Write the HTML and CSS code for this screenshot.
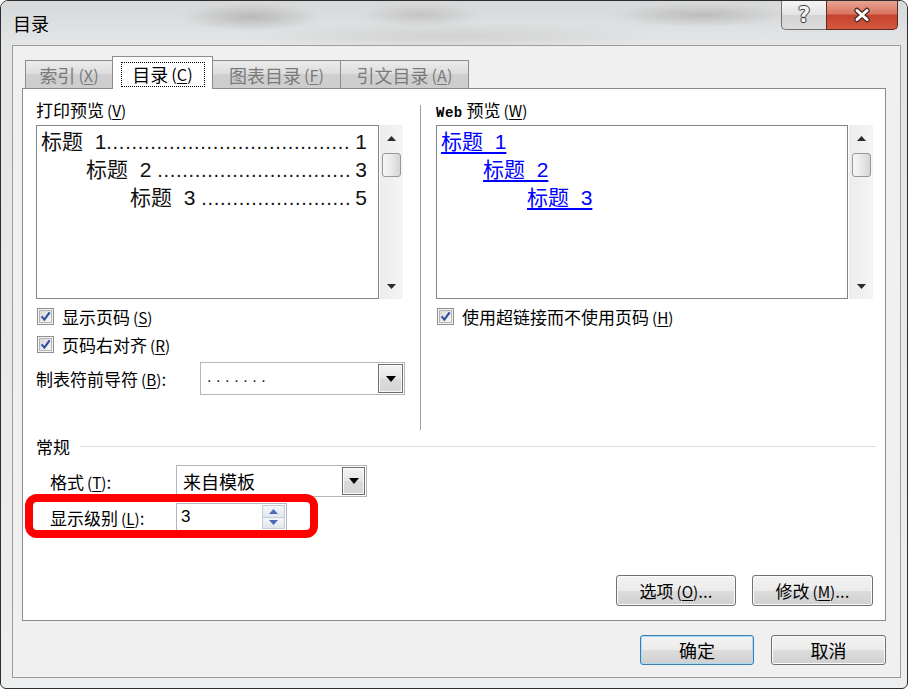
FILE: index.html
```html
<!DOCTYPE html>
<html lang="zh-CN">
<head>
<meta charset="utf-8">
<title>目录</title>
<link rel="stylesheet" href="styles.css">
</head>
<body>
<div class="window">
  <div class="titlebar">
    <span class="title">目录</span>
    <div class="caption">
      <div class="cap-btn cap-help"><span class="qmark">?</span></div>
      <div class="cap-btn cap-close">
        <svg width="22" height="16" viewBox="0 0 22 16"><path d="M6 3.5 L16 12.5 M16 3.5 L6 12.5" stroke="#4a2b25" stroke-width="5.5" stroke-linecap="round"/><path d="M6 3.5 L16 12.5 M16 3.5 L6 12.5" stroke="#ffffff" stroke-width="3" stroke-linecap="round"/></svg>
      </div>
    </div>
  </div>
  <div class="client">
    <div class="tabs">
      <div class="tab tab-1">索引<span class="k">(<u>X</u>)</span></div>
      <div class="tab tab-2 active"><span class="focus">目录<span class="k">(<u>C</u>)</span></span></div>
      <div class="tab tab-3">图表目录<span class="k">(<u>F</u>)</span></div>
      <div class="tab tab-4">引文目录<span class="k">(<u>A</u>)</span></div>
    </div>
    <div class="panel">
      <div class="columns">
        <div class="col col-left">
          <div class="label">打印预览<span class="k">(<u>V</u>)</span></div>
          <div class="preview-row">
            <div class="preview-box">
              <div class="toc-line"><span class="head">标题&nbsp;&nbsp;1</span><span class="dots">.......................................</span><span class="num">1</span></div>
              <div class="toc-line lvl-2"><span class="head">标题&nbsp;&nbsp;2&nbsp;</span><span class="dots">...............................</span><span class="num">3</span></div>
              <div class="toc-line lvl-3"><span class="head">标题&nbsp;&nbsp;3&nbsp;</span><span class="dots">........................</span><span class="num">5</span></div>
            </div>
            <div class="scrollbar sb-left">
              <div class="sb-arrow"><svg width="9" height="5" viewBox="0 0 9 5"><path d="M0 5 L4.5 0 L9 5Z" fill="#2b2b2b"/></svg></div>
              <div class="sb-thumb"></div>
              <div class="sb-fill"></div>
              <div class="sb-arrow"><svg width="9" height="5" viewBox="0 0 9 5"><path d="M0 0 L4.5 5 L9 0Z" fill="#2b2b2b"/></svg></div>
            </div>
          </div>
          <div class="check-row first">
            <svg class="cb" width="17" height="17" viewBox="0 0 17 17"><defs><linearGradient id="cbg" x1="0" y1="0" x2="1" y2="1"><stop offset="0" stop-color="#d6d6d6"/><stop offset="1" stop-color="#fbfbfb"/></linearGradient></defs><rect x="0.5" y="0.5" width="16" height="16" fill="#f4f4f4" stroke="#8f8f8f"/><rect x="2.5" y="2.5" width="12" height="12" fill="url(#cbg)" stroke="#b4b4b4"/><path d="M4.6 8.4 L7.4 11.6 L12.6 4.4" fill="none" stroke="#2f4f9f" stroke-width="2.2"/></svg>
            <span>显示页码<span class="k">(<u>S</u>)</span></span>
          </div>
          <div class="check-row">
            <svg class="cb" width="17" height="17" viewBox="0 0 17 17"><rect x="0.5" y="0.5" width="16" height="16" fill="#f4f4f4" stroke="#8f8f8f"/><rect x="2.5" y="2.5" width="12" height="12" fill="url(#cbg)" stroke="#b4b4b4"/><path d="M4.6 8.4 L7.4 11.6 L12.6 4.4" fill="none" stroke="#2f4f9f" stroke-width="2.2"/></svg>
            <span>页码右对齐<span class="k">(<u>R</u>)</span></span>
          </div>
          <div class="leader-row">
            <span class="leader-label">制表符前导符<span class="k">(<u>B</u>)</span>:</span>
            <div class="combo combo-leader">
              <span class="combo-text leader-dots">.......</span>
              <div class="combo-btn"><svg width="10" height="6" viewBox="0 0 10 6"><path d="M0 0 L5 6 L10 0Z" fill="#000"/></svg></div>
            </div>
          </div>
        </div>
        <div class="sep"></div>
        <div class="col col-right">
          <div class="label"><span class="web">Web</span> 预览<span class="k">(<u>W</u>)</span></div>
          <div class="preview-row">
            <div class="preview-box web-box">
              <div class="link-line"><span class="link">标题&nbsp;&nbsp;1</span></div>
              <div class="link-line lvl-2w"><span class="link">标题&nbsp;&nbsp;2</span></div>
              <div class="link-line lvl-3w"><span class="link">标题&nbsp;&nbsp;3</span></div>
            </div>
            <div class="scrollbar sb-right">
              <div class="sb-arrow"><svg width="9" height="5" viewBox="0 0 9 5"><path d="M0 5 L4.5 0 L9 5Z" fill="#2b2b2b"/></svg></div>
              <div class="sb-thumb"></div>
              <div class="sb-fill"></div>
              <div class="sb-arrow"><svg width="9" height="5" viewBox="0 0 9 5"><path d="M0 0 L4.5 5 L9 0Z" fill="#2b2b2b"/></svg></div>
            </div>
          </div>
          <div class="check-row first">
            <svg class="cb" width="17" height="17" viewBox="0 0 17 17"><rect x="0.5" y="0.5" width="16" height="16" fill="#f4f4f4" stroke="#8f8f8f"/><rect x="2.5" y="2.5" width="12" height="12" fill="url(#cbg)" stroke="#b4b4b4"/><path d="M4.6 8.4 L7.4 11.6 L12.6 4.4" fill="none" stroke="#2f4f9f" stroke-width="2.2"/></svg>
            <span>使用超链接而不使用页码<span class="k">(<u>H</u>)</span></span>
          </div>
        </div>
      </div>
      <div class="group-head"><span>常规</span><span class="group-line"></span></div>
      <div class="form-row">
        <span class="form-label">格式<span class="k">(<u>T</u>)</span>:</span>
        <div class="combo combo-format">
          <span class="combo-text">来自模板</span>
          <div class="combo-btn"><svg width="10" height="6" viewBox="0 0 10 6"><path d="M0 0 L5 6 L10 0Z" fill="#000"/></svg></div>
        </div>
      </div>
      <div class="form-row row-level">
        <span class="form-label">显示级别<span class="k">(<u>L</u>)</span>:</span>
        <div class="spinner">
          <span class="spin-text">3</span>
          <div class="spin-btns">
            <div class="spin-half"><svg width="9" height="5" viewBox="0 0 9 5"><path d="M0 5 L4.5 0 L9 5Z" fill="#4a6cb8"/></svg></div>
            <div class="spin-half"><svg width="9" height="5" viewBox="0 0 9 5"><path d="M0 0 L4.5 5 L9 0Z" fill="#4a6cb8"/></svg></div>
          </div>
        </div>
      </div>
      <div class="highlight"></div>
      <div class="panel-btns">
        <div class="btn btn-options">选项<span class="k">(<u>O</u>)</span>...</div>
        <div class="btn btn-modify">修改<span class="k">(<u>M</u>)</span>...</div>
      </div>
    </div>
    <div class="dialog-btns">
      <div class="btn btn-ok default">确定</div>
      <div class="btn btn-cancel">取消</div>
    </div>
  </div>
</div>
</body>
</html>
```

FILE: styles.css
```css
* {
  box-sizing: border-box;
}

html, body {
  margin: 0;
  padding: 0;
}

body {
  width: 910px;
  height: 689px;
  overflow: hidden;
  background: #ffffff;
  font-family: "Noto Sans CJK SC", "Liberation Sans", sans-serif;
  color: #000;
}

u {
  text-decoration: underline;
  text-underline-offset: 2px;
}

.k {
  margin-left: 3px;
  font-size: 0.9em;
}

.window {
  width: 908px;
  height: 689px;
  border: 1px solid #2e2e2e;
  border-radius: 8px 8px 6px 6px;
  background: linear-gradient(#e2e4e6, #eceeef);
  display: flex;
  flex-direction: column;
  overflow: hidden;
}

/* title bar */
.titlebar {
  flex: none;
  height: 44px;
  display: flex;
  align-items: flex-start;
  padding-left: 12px;
  background:
    radial-gradient(ellipse 70px 14px at 250px 16px, rgba(120,120,120,0.35), rgba(120,120,120,0)),
    radial-gradient(ellipse 60px 12px at 420px 14px, rgba(140,140,140,0.3), rgba(140,140,140,0)),
    radial-gradient(ellipse 90px 12px at 700px 14px, rgba(130,130,130,0.35), rgba(130,130,130,0)),
    radial-gradient(ellipse 200px 14px at 450px 36px, rgba(170,170,170,0.3), rgba(170,170,170,0)),
    linear-gradient(#d7d8d9, #e4e5e6);
}

.title {
  font-size: 18px;
  line-height: 44px;
  color: #000;
}

.caption {
  margin-left: auto;
  margin-right: 9px;
  display: flex;
  height: 29px;
}

.cap-btn {
  height: 29px;
  display: flex;
  align-items: center;
  justify-content: center;
  border: 1px solid #6f6f6f;
  border-top: none;
}

.cap-help {
  width: 45px;
  border-right: none;
  border-radius: 0 0 0 5px;
  background: linear-gradient(#f4f4f4, #e4e4e4 48%, #d3d3d3 52%, #dcdcdc);
}

.qmark {
  font-family: "DejaVu Sans", sans-serif;
  font-weight: bold;
  font-size: 21px;
  line-height: 24px;
  color: #f4f4f4;
  text-shadow: 1px 0 0 #3a3a3a, -1px 0 0 #3a3a3a, 0 1px 0 #3a3a3a, 0 -1px 0 #3a3a3a;
}

.cap-close {
  width: 72px;
  border-color: #5b2b22;
  border-radius: 0 0 5px 0;
  background: linear-gradient(#e8a493, #d97561 45%, #c5432c 52%, #d3573f);
}

/* client area */
.client {
  flex: none;
  height: 633px;
  margin: 0 6px 0 11px;
  border: 1px solid #9c9c9c;
  background: #f0f0f0;
  padding: 10px 0 0 9px;
  display: flex;
  flex-direction: column;
}

.tabs {
  position: relative;
  z-index: 1;
  height: 32px;
  display: flex;
  align-items: flex-end;
  padding-left: 3px;
}

.tab {
  height: 28px;
  border: 1px solid #898c95;
  border-bottom: none;
  background: linear-gradient(#ececec, #dcdcdc 50%, #cfcfcf 50%, #cdcdcd);
  color: #7a7a7a;
  font-size: 18px;
  line-height: 26px;
  display: flex;
  justify-content: center;
  align-items: center;
  margin-left: -1px;
}

.tab-1 { width: 88px; margin-left: 0; }
.tab-2 { width: 101px; }
.tab-3 { width: 129px; }
.tab-4 { width: 129px; }

.tab.active {
  position: relative;
  z-index: 2;
  height: 33px;
  margin-bottom: -1px;
  background: #ffffff;
  color: #000;
}

.focus {
  display: flex;
  align-items: center;
  justify-content: center;
  width: 84px;
  height: 25px;
  margin-top: 2px;
  border: 1px dotted #000;
}

.panel {
  position: relative;
  width: 864px;
  height: 533px;
  border: 1px solid #898c95;
  background: #ffffff;
  padding: 11px 12px 0 13px;
  display: flex;
  flex-direction: column;
}

.columns {
  height: 330px;
  display: flex;
  align-items: flex-start;
  flex: none;
}

.col-left { width: 369px; }
.col-right { width: 437px; }

.sep {
  width: 2px;
  height: 325px;
  margin: 5px 14px 0 15px;
  border-left: 1px solid #a0a0a0;
  border-right: 1px solid #ffffff;
}

.label {
  height: 20px;
  font-size: 17px;
  line-height: 20px;
  white-space: nowrap;
}

.web {
  font-family: "Liberation Mono", monospace;
  font-size: 14px;
  font-weight: bold;
  letter-spacing: 0.5px;
}

.preview-row {
  margin-top: 5px;
  height: 174px;
  display: flex;
  gap: 1px;
}

.preview-box {
  width: 343px;
  height: 174px;
  border: 1px solid #80848c;
  background: #fff;
  padding: 2px 11px 0 4px;
  overflow: hidden;
}

.web-box {
  width: 412px;
}

.toc-line {
  display: flex;
  height: 28px;
  line-height: 28px;
  font-family: "Liberation Sans", "Noto Sans CJK SC", sans-serif;
  font-size: 21px;
  white-space: nowrap;
  color: #111;
}

.toc-line.lvl-2 { padding-left: 45px; }
.toc-line.lvl-3 { padding-left: 89px; }

.dots {
  font-size: 20px;
  letter-spacing: 0.7px;
}

.num {
  margin-left: auto;
}

.link-line {
  height: 28px;
  line-height: 28px;
  font-family: "Liberation Sans", "Noto Sans CJK SC", sans-serif;
  font-size: 21px;
  white-space: nowrap;
}

.link-line.lvl-2w { padding-left: 42px; }
.link-line.lvl-3w { padding-left: 86px; }

.link {
  color: #0000ff;
  text-decoration: underline;
  text-underline-offset: 3px;
}

.scrollbar {
  width: 23px;
  height: 174px;
  background: linear-gradient(90deg, #ececec, #f5f5f5);
  display: flex;
  flex-direction: column;
  align-items: center;
}

.sb-right { width: 24px; }

.sb-arrow {
  height: 26px;
  width: 100%;
  display: flex;
  align-items: center;
  justify-content: center;
  flex: none;
}

.sb-thumb {
  width: 19px;
  height: 24px;
  margin-top: 2px;
  border: 1px solid #979797;
  border-radius: 3px;
  background: linear-gradient(90deg, #f7f7f7, #e9e9e9 50%, #d4d4d4);
  flex: none;
}

.sb-fill { flex: 1; }

.check-row {
  height: 28px;
  display: flex;
  align-items: center;
  gap: 8px;
  font-size: 17px;
  white-space: nowrap;
}

.check-row.first { margin-top: 3px; }

.cb {
  margin-left: 1px;
  flex: none;
}

.leader-row {
  margin-top: 4px;
  height: 33px;
  display: flex;
  align-items: center;
}

.leader-label {
  width: 164px;
  font-size: 17px;
  white-space: nowrap;
}

.combo {
  height: 33px;
  border: 1px solid #b4b6bb;
  background: #fff;
  display: flex;
  align-items: center;
  padding: 0 1px 0 6px;
}

.combo-leader { width: 205px; }

.combo-text {
  flex: 1;
  font-size: 18px;
  white-space: nowrap;
}

.leader-dots {
  font-family: "Liberation Sans", sans-serif;
  font-size: 16px;
  letter-spacing: 4.6px;
  color: #222;
  padding-bottom: 4px;
}

.combo-btn {
  width: 25px;
  height: 29px;
  border: 1px solid #6d6d6d;
  background: linear-gradient(#f3f3f3, #e6e6e6 50%, #dadada 50%, #d6d6d6);
  display: flex;
  align-items: center;
  justify-content: center;
  box-shadow: inset 0 0 0 1px #fafafa;
}

.group-head {
  margin-top: 7px;
  height: 20px;
  display: flex;
  align-items: center;
  font-size: 17px;
  line-height: 20px;
  margin-right: -3px;
}

.group-line {
  flex: 1;
  height: 1px;
  margin-left: 10px;
  margin-top: -1px;
  background: #d5dfe5;
}

.form-row {
  margin-top: 8px;
  height: 32px;
  display: flex;
  align-items: center;
  padding-left: 14px;
}

.row-level {
  margin-top: 6px;
  height: 28px;
}

.form-label {
  width: 126px;
  font-size: 17px;
  white-space: nowrap;
}

.combo-format {
  width: 191px;
  height: 32px;
}

.combo-format .combo-btn {
  width: 23px;
  height: 28px;
}

.spinner {
  width: 111px;
  height: 28px;
  border: 1px solid #b4b6bb;
  background: #fff;
  display: flex;
  align-items: center;
  padding: 0 1px 0 4px;
}

.spin-text {
  flex: 1;
  font-family: "Liberation Sans", sans-serif;
  font-size: 17px;
}

.spin-btns {
  width: 23px;
  height: 24px;
  display: flex;
  flex-direction: column;
}

.spin-half {
  flex: 1;
  display: flex;
  align-items: center;
  justify-content: center;
  border: 1px solid #c3ccd9;
  background: linear-gradient(#f4f6f9, #e2e7ee);
}

.spin-half + .spin-half { border-top: none; }

.highlight {
  position: absolute;
  left: 2px;
  top: 405px;
  width: 293px;
  height: 44px;
  border: 8px solid #ff0000;
  border-radius: 12px;
}

.panel-btns {
  margin-top: 44px;
  display: flex;
  justify-content: flex-end;
  gap: 16px;
}

.btn {
  height: 31px;
  border: 1px solid #707070;
  border-radius: 3px;
  background: linear-gradient(#f3f3f3, #ebebeb 50%, #dddddd 50%, #d0d0d0);
  box-shadow: inset 0 0 0 1px #fbfbfb;
  display: flex;
  align-items: center;
  justify-content: center;
  font-size: 17px;
  white-space: nowrap;
}

.btn-options { width: 120px; }
.btn-modify { width: 121px; }

.dialog-btns {
  width: 864px;
  margin-top: 14px;
  display: flex;
  justify-content: flex-end;
  gap: 17px;
}

.btn-ok, .btn-cancel {
  height: 30px;
  font-size: 18px;
}

.btn-ok { width: 114px; }
.btn-cancel { width: 115px; }

.btn.default {
  border-color: #3c7fb1;
  box-shadow: inset 0 0 0 1px #a6dcf5;
}
```
